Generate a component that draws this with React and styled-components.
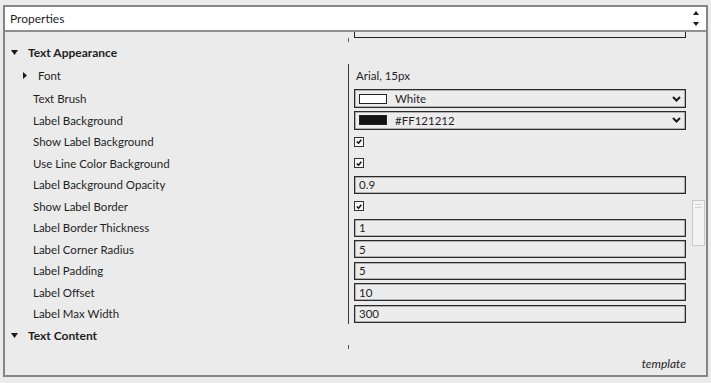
import styled, { createGlobalStyle } from 'styled-components';

const GlobalStyle = createGlobalStyle`
  html, body {
    margin: 0;
    padding: 0;
    background: #ebebeb;
  }
  body {
    font-family: Lato, 'Noto Sans', sans-serif;
    font-size: 11.5px;
    color: #1f1f1f;
  }
`;

const Page = styled.div`
  width: 711px;
  height: 383px;
  box-sizing: border-box;
  padding: 5px 3px 6px 3px;
`;

const Frame = styled.div`
  height: 100%;
  box-sizing: border-box;
  border: 2px solid #858585;
  display: flex;
  flex-direction: column;
  background: #ebebeb;
`;

const Header = styled.div`
  height: 23px;
  flex: none;
  background: #fff;
  border-bottom: 2px solid #8f8f8f;
  display: flex;
  align-items: center;
  justify-content: space-between;
  padding: 0 7px 0 5px;
  font-size: 12px;
`;

const Spin = styled.div`
  display: flex;
  flex-direction: column;
  gap: 7px;
  svg {
    display: block;
  }
`;

const Body = styled.div`
  flex: 1;
  display: flex;
  min-height: 0;
`;

const Main = styled.div`
  flex: 1;
  display: flex;
  flex-direction: column;
`;

const Row = styled.div`
  display: grid;
  grid-template-columns: 343px 1fr;
  height: ${(p) => p.$h || 21.5}px;
`;

const LabelCell = styled.div`
  display: flex;
  align-items: center;
  padding-left: ${(p) => p.$indent || 28}px;
  gap: ${(p) => p.$gap || 6}px;
  font-weight: ${(p) => (p.$bold ? 700 : 400)};
  font-size: ${(p) => (p.$bold ? 12 : 11.5)}px;
  white-space: nowrap;
`;

const ValueCell = styled.div`
  position: relative;
  display: flex;
  align-items: center;
  padding: 0 5px 0 5px;
  border-left: ${(p) => (p.$split ? '1px solid #3a3a3a' : '1px solid transparent')};
  &::before {
    content: ${(p) => (p.$tick ? "''" : 'none')};
    position: absolute;
    left: -1px;
    bottom: -2px;
    width: 1px;
    height: 4px;
    background: #555;
  }
`;

const PartialBox = styled.div`
  align-self: flex-start;
  width: 100%;
  height: 6px;
  box-sizing: border-box;
  border: 1px solid #222;
  border-top: none;
`;

const Input = styled.div`
  flex: 1;
  height: 18px;
  box-sizing: border-box;
  border: 1px solid #2a2a2a;
  box-shadow: inset 0 0 0 0.5px #777;
  display: flex;
  align-items: center;
  padding-left: 4px;
  gap: 8px;
  background: #ececec;
`;

const Select = styled(Input)`
  height: 19px;
  padding-left: 4px;
  padding-right: 4px;
`;

const Swatch = styled.span`
  width: 28px;
  height: 10px;
  box-sizing: border-box;
  border: 1px solid #222;
  background: ${(p) => p.$color};
  flex: none;
`;

const SelectText = styled.span`
  flex: 1;
`;

const Check = styled.span`
  width: 10px;
  height: 10px;
  box-sizing: border-box;
  border: 1px solid #333;
  background: #f6f6f6;
  display: flex;
  align-items: center;
  justify-content: center;
`;

const PlainValue = styled.span`
  padding-left: 2px;
`;

const Footer = styled.div`
  flex: 1;
  display: flex;
  align-items: center;
  justify-content: flex-end;
  padding: 6px 5px 0 0;
  font-style: italic;
  font-size: 12px;
`;

const Track = styled.div`
  width: 15px;
  flex: none;
  display: flex;
  flex-direction: column;
  align-items: center;
`;

const Thumb = styled.div`
  margin-top: 168px;
  width: 13px;
  height: 46px;
  box-sizing: border-box;
  border: 1px solid #c9c9c9;
  background: #f3f3f3;
  padding: 3px 2px 0;
  display: flex;
  flex-direction: column;
  gap: 2px;
  span {
    height: 1px;
    background: #d6d6d6;
  }
`;

const DownTri = () => (
  <svg width="7" height="5" viewBox="0 0 7 5">
    <path d="M0 0H7L3.5 5Z" fill="#1a1a1a" />
  </svg>
);

const RightTri = () => (
  <svg width="4" height="7" viewBox="0 0 4 7">
    <path d="M0 0L4 3.5L0 7Z" fill="#1a1a1a" />
  </svg>
);

const Chevron = () => (
  <svg width="9" height="6" viewBox="0 0 9 6">
    <path d="M1 1L4.5 4.5L8 1" fill="none" stroke="#1a1a1a" strokeWidth="2" />
  </svg>
);

const Tick = () => (
  <svg width="6" height="5" viewBox="0 0 6 5">
    <path d="M0.8 2.5L2.5 4.2L5.3 0.8" fill="none" stroke="#111" strokeWidth="1.5" />
  </svg>
);

const props = [
  { label: 'Text Brush', type: 'select', swatch: '#ffffff', value: 'White' },
  { label: 'Label Background', type: 'select', swatch: '#121212', value: '#FF121212' },
  { label: 'Show Label Background', type: 'check' },
  { label: 'Use Line Color Background', type: 'check' },
  { label: 'Label Background Opacity', type: 'input', value: '0.9' },
  { label: 'Show Label Border', type: 'check' },
  { label: 'Label Border Thickness', type: 'input', value: '1' },
  { label: 'Label Corner Radius', type: 'input', value: '5' },
  { label: 'Label Padding', type: 'input', value: '5' },
  { label: 'Label Offset', type: 'input', value: '10' },
  { label: 'Label Max Width', type: 'input', value: '300' },
];

function Value({ item }) {
  if (item.type === 'select') {
    return (
      <Select>
        <Swatch $color={item.swatch} />
        <SelectText>{item.value}</SelectText>
        <Chevron />
      </Select>
    );
  }
  if (item.type === 'check') {
    return (
      <Check>
        <Tick />
      </Check>
    );
  }
  return <Input>{item.value}</Input>;
}

export default function App() {
  return (
    <>
      <GlobalStyle />
      <Page>
        <Frame>
          <Header>
            <span>Properties</span>
            <Spin>
              <svg width="6" height="4" viewBox="0 0 6 4">
                <path d="M0 4L3 0L6 4Z" fill="#1a1a1a" />
              </svg>
              <svg width="6" height="4" viewBox="0 0 6 4">
                <path d="M0 0H6L3 4Z" fill="#1a1a1a" />
              </svg>
            </Spin>
          </Header>
          <Body>
            <Main>
              <Row $h={8}>
                <LabelCell />
                <ValueCell $tick>
                  <PartialBox />
                </ValueCell>
              </Row>
              <Row $h={24}>
                <LabelCell $indent={6} $gap={10} $bold>
                  <DownTri />
                  Text Appearance
                </LabelCell>
                <ValueCell />
              </Row>
              <Row $h={23.75}>
                <LabelCell $indent={18} $gap={11}>
                  <RightTri />
                  Font
                </LabelCell>
                <ValueCell $split>
                  <PlainValue>Arial, 15px</PlainValue>
                </ValueCell>
              </Row>
              {props.map((item) => (
                <Row key={item.label}>
                  <LabelCell>{item.label}</LabelCell>
                  <ValueCell $split>
                    <Value item={item} />
                  </ValueCell>
                </Row>
              ))}
              <Row $h={22.5}>
                <LabelCell $indent={6} $gap={10} $bold>
                  <DownTri />
                  Text Content
                </LabelCell>
                <ValueCell $tick />
              </Row>
              <Footer>template</Footer>
            </Main>
            <Track>
              <Thumb>
                <span />
                <span />
              </Thumb>
            </Track>
          </Body>
        </Frame>
      </Page>
    </>
  );
}
